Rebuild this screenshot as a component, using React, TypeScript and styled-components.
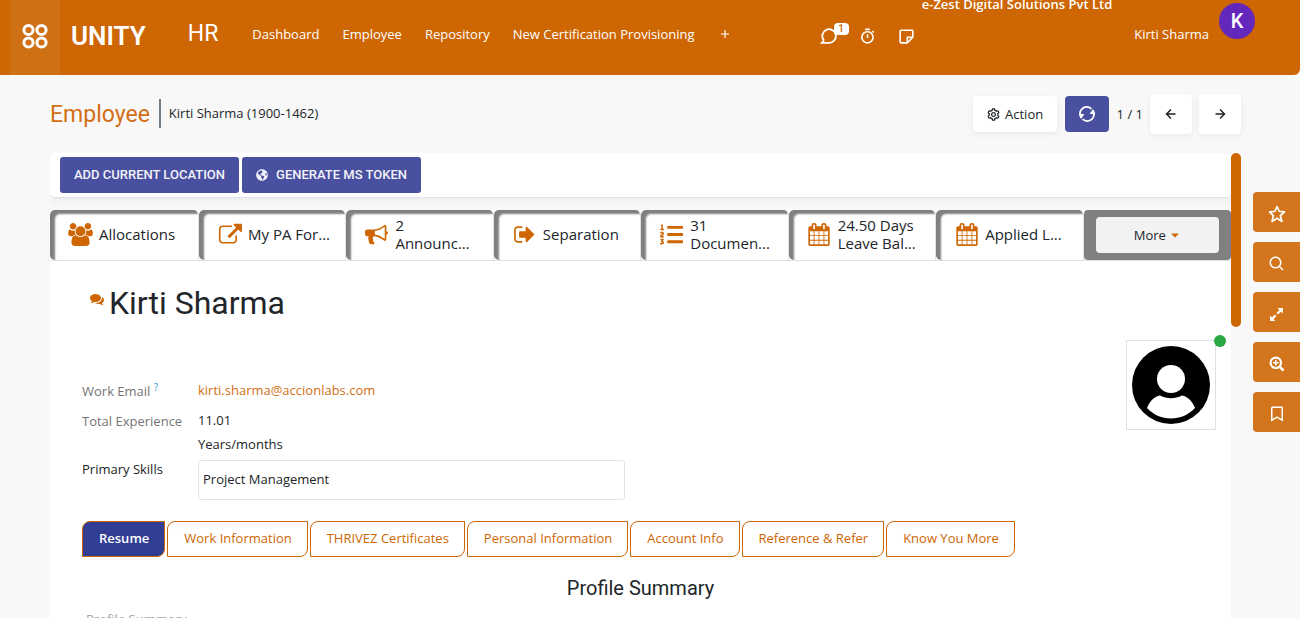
import React from 'react';
import styled, { createGlobalStyle, css } from 'styled-components';
import {
  BiStopwatch, BiNote, BiStar, BiSearch, BiBookmark,
  BiCog, BiLeftArrowAlt, BiRightArrowAlt, BiPlus,
} from 'react-icons/bi';
import { FaGlobeAmericas, FaListOl, FaCaretDown } from 'react-icons/fa';

const orange = '#cd6603';
const indigo = '#49509f';
const text = '#212529';
const heading = 'Roboto, "Open Sans", sans-serif';

const GlobalStyle = createGlobalStyle`
  *, *::before, *::after { box-sizing: border-box; }
  body {
    margin: 0;
    background: #f8f8f8;
    color: ${text};
    font: 400 13px/24px "Open Sans", Roboto, sans-serif;
  }
  button, input { font: inherit; color: inherit; margin: 0; }
  button { border: 0; cursor: pointer; }
  a { text-decoration: none; }
  svg { display: block; flex: none; }
  h1, h2, p { margin: 0; font-weight: 400; }
`;

const Page = styled.div`
  height: 100vh;
  display: flex;
  flex-direction: column;
  overflow: hidden;
`;

const Header = styled.header`
  flex: none;
  display: flex;
  align-items: center;
  height: 75px;
  padding: 0 45px 0 10px;
  overflow: hidden;
  background: ${orange};
  color: #fff;
  border-bottom-right-radius: 6px;
`;

const Launcher = styled.button`
  align-self: stretch;
  display: flex;
  align-items: center;
  justify-content: center;
  width: 50px;
  padding: 0 0 4px;
  background: #d07014;
  color: #fff;
`;

const Brand = styled.a`
  margin-left: 11px;
  padding-bottom: 4px;
  color: #fff;
  font: 600 26px/32px ${heading};
`;

const AppName = styled.a`
  margin-left: 42px;
  padding-bottom: 8px;
  color: #fff;
  font: 400 23px/32px ${heading};
`;

const Nav = styled.nav`
  display: flex;
  align-items: center;
  gap: 23px;
  margin-left: 34px;
  padding-bottom: 8px;
  white-space: nowrap;
`;

const NavLink = styled.a`
  color: #fff;
  font-weight: 500;
`;

const HeaderIcon = styled.button`
  position: relative;
  display: flex;
  padding: 0;
  background: none;
  color: #fff;
`;

const Badge = styled.span`
  position: absolute;
  top: -4px;
  left: 14px;
  width: 15px;
  height: 12px;
  border-radius: 4px;
  background: #fff;
  color: ${orange};
  font: 500 10px/12px ${heading};
  text-align: center;
`;

const Tray = styled.div`
  display: flex;
  gap: 20px;
  margin-left: auto;
  padding-bottom: 3px;
`;

const Company = styled.span`
  align-self: flex-start;
  margin: -8px 0 0 6px;
  font-size: 13px;
  font-weight: 600;
  white-space: nowrap;
`;

const UserName = styled.span`
  margin-left: 22px;
  padding-bottom: 8px;
  font-weight: 500;
  white-space: nowrap;
`;

const UserBadge = styled.span`
  align-self: flex-start;
  width: 36px;
  height: 36px;
  margin: 3px 0 0 10px;
  border-radius: 50%;
  background: #6327bb;
  font: 500 20px/36px ${heading};
  text-align: center;
`;

const Body = styled.div`
  flex: 1;
  min-height: 0;
  display: flex;
  gap: 12px;
  padding-left: 50px;
`;

const Main = styled.main`
  flex: 1;
  min-width: 0;
  display: flex;
  flex-direction: column;
`;

const ControlBar = styled.div`
  flex: none;
  display: flex;
  align-items: center;
  height: 78px;
`;

const Crumb = styled.h1`
  padding: 2px 9px 0 0;
  color: #d36f14;
  font: 400 23px/30px ${heading};
`;

const CrumbCurrent = styled.span`
  margin-bottom: 1px;
  padding-left: 8px;
  border-left: 2px solid #6f7d88;
  line-height: 29px;
`;

const Actions = styled.div`
  display: flex;
  align-items: center;
  margin-left: auto;
`;

const ActionButton = styled.button`
  display: flex;
  align-items: center;
  justify-content: center;
  gap: 4px;
  width: 84px;
  height: 36px;
  padding: 0;
  border-radius: 4px;
  background: #fff;
  box-shadow: 0 2px 6px rgba(0, 0, 0, 0.06);
`;

const RefreshButton = styled(ActionButton)`
  width: 44px;
  margin: 0 8px;
  background: ${indigo};
  color: #fff;
  box-shadow: none;
`;

const Pager = styled.div`
  display: flex;
  align-items: center;
  gap: 7px;
`;

const PageButton = styled(ActionButton)`
  width: 42px;
  height: 40px;
`;

const Scroller = styled.div`
  flex: 1;
  min-height: 0;
  display: flex;
  align-items: flex-start;
`;

const Sheet = styled.div`
  flex: 1;
  min-width: 0;
  align-self: stretch;
  display: flex;
  flex-direction: column;
  overflow: hidden;
`;

const ScrollThumb = styled.div`
  width: 10px;
  height: 174px;
  border-radius: 5px;
  background: ${orange};
`;

const StatusBar = styled.div`
  flex: none;
  display: flex;
  gap: 3px;
  padding: 4px 10px;
  border-bottom: 1px solid #dee2e6;
  border-radius: 5px;
  background: #fff;
  box-shadow: 0 2px 8px rgba(0, 0, 0, 0.06);
`;

const StatusButton = styled.button`
  display: flex;
  align-items: center;
  justify-content: center;
  gap: 8px;
  width: 179px;
  height: 36px;
  padding: 0;
  border-radius: 3px;
  background: ${indigo};
  color: #f3f3fa;
  font: 500 13px/20px ${heading};
  text-transform: uppercase;
  white-space: nowrap;
`;

const Stats = styled.div`
  flex: none;
  display: grid;
  grid-template-columns: 149px repeat(7, minmax(0, 1fr));
  margin-top: 12px;
  border-bottom: 1px solid #dee2e6;
  background: #fff;
`;

const Stat = styled.button`
  display: grid;
  grid-template-columns: 25px minmax(0, 1fr);
  align-items: center;
  height: 50px;
  gap: 6px;
  padding: 0 16px 2px 18px;
  border-right: 1px solid #dee2e6;
  border-radius: 5px 5px 0 5px;
  background: #fff;
  box-shadow: inset 5px 4px 2px #808080;
  font-size: 15px;
  line-height: 18px;
  text-align: left;
  white-space: nowrap;

  svg { justify-self: center; color: ${orange}; }
`;

const StatText = styled.span`
  display: flex;
  flex-direction: column;
`;

const MoreCell = styled.div`
  display: flex;
  padding: 7px 12px;
  border-radius: 4px;
  background: #808080;
`;

const MoreButton = styled.button`
  flex: 1;
  display: flex;
  align-items: center;
  justify-content: center;
  gap: 3px;
  padding: 0;
  border-radius: 4px;
  background: #f2f2f2;

  svg { color: ${orange}; }
`;

const Form = styled.section`
  flex: 1 0 auto;
  padding: 22px 15px 0 32px;
  background: #fff;
`;

const NameRow = styled.div`
  display: flex;
  align-items: flex-start;
  gap: 5px;
  padding-left: 8px;
  font: 400 32px/40px ${heading};

  svg { margin-top: 9px; color: ${orange}; }
`;

const Name = styled.h1`
  font: inherit;
`;

const Details = styled.div`
  display: flex;
  justify-content: space-between;
  align-items: flex-start;
  margin-top: 17px;
`;

const Fields = styled.div`
  display: grid;
  grid-template-columns: 116px 427px;
  padding-top: 38px;
`;

const Label = styled.label<{ $strong?: boolean; $lead?: boolean }>`
  padding-top: 1px;
  color: ${(p) => (p.$strong ? text : '#757575')};
  ${(p) => p.$lead && css`margin-top: 5px;`}
`;

const Help = styled.sup`
  color: #1fa2c4;
  font-size: 10px;
  line-height: 0;
`;

const Value = styled.div<{ $lead?: boolean }>`
  ${(p) => p.$lead && css`margin-top: 5px;`}
`;

const Email = styled.a`
  color: #d36f14;
`;

const SkillInput = styled.input`
  width: 100%;
  height: 40px;
  margin-top: 4px;
  padding: 0 4px 2px;
  border: 1px solid #e2e2ee;
  border-radius: 3px;
  background: #fff;
`;

const Photo = styled.div`
  position: relative;
  display: flex;
  align-items: center;
  justify-content: center;
  width: 90px;
  height: 90px;
  border: 1px solid #dee2e6;
`;

const Online = styled.span`
  position: absolute;
  top: -6px;
  right: -11px;
  width: 12px;
  height: 12px;
  border-radius: 50%;
  background: #28a745;
`;

const Tabs = styled.div`
  display: flex;
  gap: 2px;
  margin-top: 21px;
`;

const Tab = styled.button<{ $active?: boolean }>`
  height: 36px;
  padding: 0 15px 2px 16px;
  border: 1px solid ${orange};
  border-radius: 8px 0;
  background: ${(p) => (p.$active ? '#323d94' : '#fff')};
  color: ${(p) => (p.$active ? '#fff' : orange)};
  font-weight: ${(p) => (p.$active ? 600 : 400)};
  white-space: nowrap;
`;

const SectionTitle = styled.h2`
  margin: 17px 0 7px;
  padding-right: 17px;
  font: 400 20px/28px ${heading};
  text-align: center;
`;

const Hint = styled.p`
  padding-left: 4px;
  color: #a5a5a5;
  line-height: 20px;
`;

const Rail = styled.aside`
  display: flex;
  flex-direction: column;
  gap: 10px;
  width: 47px;
  padding-top: 117px;
`;

const RailButton = styled.button`
  display: flex;
  align-items: center;
  justify-content: center;
  height: 40px;
  padding: 4px 0 0;
  border-radius: 4px 0 0 4px;
  background: #d3751d;
  color: #fff;
`;

const glyphs = {
  users: ['-64 0 1920 1792', 'M529 896q-162 5-265 128h-134q-82 0-138-40.5t-56-118.5q0-353 124-353 6 0 43.5 21t97.5 42.5 119 21.5q67 0 133-23-5 37-5 66 0 139 81 256zm1071 637q0 120-73 189.5t-194 69.5h-874q-121 0-194-69.5t-73-189.5q0-53 3.5-103.5t14-109 26.5-108.5 43-97.5 62-81 85.5-53.5 111.5-20q10 0 43 21.5t73 48 107 48 135 21.5 135-21.5 107-48 73-48 43-21.5q61 0 111.5 20t85.5 53.5 62 81 43 97.5 26.5 108.5 14 109 3.5 103.5zm-1024-1277q0 106-75 181t-181 75-181-75-75-181 75-181 181-75 181 75 75 181zm704 384q0 159-112.5 271.5t-271.5 112.5-271.5-112.5-112.5-271.5 112.5-271.5 271.5-112.5 271.5 112.5 112.5 271.5zm576 225q0 78-56 118.5t-138 40.5h-134q-103-123-265-128 81-117 81-256 0-29-5-66 66 23 133 23 59 0 119-21.5t97.5-42.5 43.5-21q124 0 124 353zm-128-609q0 106-75 181t-181 75-181-75-75-181 75-181 181-75 181 75 75 181z'],
  external: ['0 0 1856 1792', 'M1472 992v320q0 119-84.5 203.5t-203.5 84.5h-832q-119 0-203.5-84.5t-84.5-203.5v-832q0-119 84.5-203.5t203.5-84.5h704q14 0 23 9t9 23v64q0 14-9 23t-23 9h-704q-66 0-113 47t-47 113v832q0 66 47 113t113 47h832q66 0 113-47t47-113v-320q0-14 9-23t23-9h64q14 0 23 9t9 23zm384-864v512q0 26-19 45t-45 19-45-19l-176-176-652 652q-10 10-23 10t-23-10l-114-114q-10-10-10-23t10-23l652-652-176-176q-19-19-19-45t19-45 45-19h512q26 0 45 19t19 45z'],
  bullhorn: ['0 0 1792 1792', 'M1664 640q53 0 90.5 37.5t37.5 90.5-37.5 90.5-90.5 37.5v384q0 52-38 90t-90 38q-417-347-812-380-58 19-91 66t-31 100.5 40 92.5q-20 33-23 65.5t6 58 33.5 55 48 50 61.5 50.5q-29 58-111.5 83t-168.5 11.5-132-55.5q-7-23-29.5-87.5t-32-94.5-23-89-15-101 3.5-98.5 22-110.5h-122q-66 0-113-47t-47-113v-192q0-66 47-113t113-47h480q435 0 896-384 52 0 90 38t38 90v384zm-128 604v-954q-394 302-768 343v270q377 42 768 341z'],
  leave: ['0 0 1664 1792', 'M704 1440q0 4 1 20t.5 26.5-3 23.5-10 19.5-20.5 6.5h-320q-119 0-203.5-84.5t-84.5-203.5v-704q0-119 84.5-203.5t203.5-84.5h320q13 0 22.5 9.5t9.5 22.5q0 4 1 20t.5 26.5-3 23.5-10 19.5-20.5 6.5h-320q-66 0-113 47t-47 113v704q0 66 47 113t113 47h312l11.5 1 11.5 3 8 5.5 7 9 2 13.5zm928-544q0 26-19 45l-544 544q-19 19-45 19t-45-19-19-45v-288h-448q-26 0-45-19t-19-45v-384q0-26 19-45t45-19h448v-288q0-26 19-45t45-19 45 19l544 544q19 19 19 45z'],
  calendar: ['64 0 1664 1792', 'M192 1664h288v-288h-288v288zm352 0h320v-288h-320v288zm-352-352h288v-320h-288v320zm352 0h320v-320h-320v320zm-352-384h288v-288h-288v288zm736 736h320v-288h-320v288zm-384-736h320v-288h-320v288zm768 736h288v-288h-288v288zm-384-352h320v-320h-320v320zm-352-864v-288q0-13-9.5-22.5t-22.5-9.5h-64q-13 0-22.5 9.5t-9.5 22.5v288q0 13 9.5 22.5t22.5 9.5h64q13 0 22.5-9.5t9.5-22.5zm736 864h288v-320h-288v320zm-384-384h320v-288h-320v288zm384 0h288v-288h-288v288zm32-480v-288q0-13-9.5-22.5t-22.5-9.5h-64q-13 0-22.5 9.5t-9.5 22.5v288q0 13 9.5 22.5t22.5 9.5h64q13 0 22.5-9.5t9.5-22.5zm384-64v1280q0 52-38 90t-90 38h-1408q-52 0-90-38t-38-90v-1280q0-52 38-90t90-38h128v-96q0-66 47-113t113-47h64q66 0 113 47t47 113v96h384v-96q0-66 47-113t113-47h64q66 0 113 47t47 113v96h128q52 0 90 38t38 90z'],
  comments: ['0 0 1792 1792', 'M1408 768q0 139-94 257t-256.5 186.5-353.5 68.5q-86 0-176-16-124 88-278 128-36 9-86 16h-3q-11 0-20.5-8t-11.5-21q-1-3-1-6.5t.5-6.5 2-6l2.5-5 3.5-5.5 4-5 4.5-5 4-4.5q5-6 23-25t26-29.5 22.5-29 25-38.5 20.5-44q-124-72-195-177t-71-224q0-139 94-257t256.5-186.5 353.5-68.5 353.5 68.5 256.5 186.5 94 257zm384 256q0 120-71 224.5t-195 176.5q10 24 20.5 44t25 38.5 22.5 29 26 29.5 23 25q1 1 4 4.5t4.5 5 4 5 3.5 5.5l2.5 5 2 6 .5 6.5-1 6.5q-3 14-13 22t-22 7q-50-7-86-16-154-40-278-128-90 16-176 16-271 0-472-132 58 4 88 4 161 0 309-45t264-129q125-92 192-212t67-254q0-77-23-152 129 71 204 178t75 230z'],
} as const;

function Glyph({ name, width, height = 23 }: { name: keyof typeof glyphs; width: number; height?: number }) {
  const [box, d] = glyphs[name];
  return (
    <svg width={width} height={height} viewBox={box} fill="currentColor" aria-hidden="true">
      <path d={d} />
    </svg>
  );
}

function RingsLogo() {
  return (
    <svg width="26" height="26" viewBox="0 0 26 26" fill="none" stroke="#fff" strokeWidth="3" aria-hidden="true">
      <circle cx="6.5" cy="7" r="4.6" />
      <circle cx="19.5" cy="7" r="4.6" />
      <circle cx="6.5" cy="19.5" r="4.6" />
      <circle cx="19.5" cy="19.5" r="4.6" />
    </svg>
  );
}

function ChatIcon() {
  return (
    <svg width="18" height="18" viewBox="0 0 18 18" fill="none" stroke="currentColor" strokeWidth="1.8" aria-hidden="true">
      <path d="M4 13.5A6.8 6.8 0 1 1 9 15.800H1.800L4 13.500" />
    </svg>
  );
}

function SyncIcon() {
  return (
    <svg width="18" height="18" viewBox="0 0 18 18" fill="none" stroke="currentColor" strokeWidth="1.8" aria-hidden="true">
      <path d="M3.600 13.200A6.800 6.800 0 0 1 13.400 3.800" />
      <path d="M14.400 4.800A6.800 6.800 0 0 1 4.600 14.200" />
      <path d="M1 8.200l5.400 1.400-3.600 3.800zM17 9.800l-5.400-1.400 3.600-3.800z" fill="currentColor" stroke="none" />
    </svg>
  );
}

function ExpandIcon() {
  return (
    <svg width="15" height="15" viewBox="0 0 15 15" aria-hidden="true">
      <path d="M8.500 1H14v5.500zM1 8.500V14h5.500z" fill="currentColor" />
      <path d="M12 3L8.300 6.700M6.700 8.300L3 12" stroke="currentColor" strokeWidth="2.200" />
    </svg>
  );
}

function ZoomIcon() {
  return (
    <svg width="16" height="16" viewBox="0 0 16 16" fill="none" stroke="currentColor" aria-hidden="true">
      <circle cx="6.800" cy="6.800" r="5.200" strokeWidth="2.200" />
      <path d="M10.800 10.800l3.700 3.700" strokeWidth="2.600" />
      <path d="M6.800 4v5.600M4 6.800h5.600" strokeWidth="1.500" />
    </svg>
  );
}

function PersonIcon() {
  return (
    <svg width="78" height="78" viewBox="0 0 78 78" aria-hidden="true">
      <circle cx="39" cy="39" r="39" fill="#000" />
      <circle cx="39" cy="33" r="14" fill="#fff" />
      <path d="M28 49.500c7 3.600 15 3.600 22 0 6 1.200 10.500 6 13 12.500C50 76 28 76 15 62c2.500-6.500 7-11.300 13-12.500z" fill="#fff" />
    </svg>
  );
}

const navItems = ['Dashboard', 'Employee', 'Repository', 'New Certification Provisioning'];

const stats: { icon: React.ReactNode; lines: string[] }[] = [
  { icon: <Glyph name="users" width={25} />, lines: ['Allocations'] },
  { icon: <Glyph name="external" width={24} />, lines: ['My PA For...'] },
  { icon: <Glyph name="bullhorn" width={23} />, lines: ['2', 'Announc...'] },
  { icon: <Glyph name="leave" width={22} />, lines: ['Separation'] },
  { icon: <FaListOl size={23} />, lines: ['31', 'Documen...'] },
  { icon: <Glyph name="calendar" width={22} />, lines: ['24.50 Days', 'Leave Bal...'] },
  { icon: <Glyph name="calendar" width={22} />, lines: ['Applied L...'] },
];

const tabs = [
  'Resume', 'Work Information', 'THRIVEZ Certificates', 'Personal Information',
  'Account Info', 'Reference & Refer', 'Know You More',
];

const railItems = [
  { label: 'Favourites', icon: <BiStar size={20} /> },
  { label: 'Search', icon: <BiSearch size={18} /> },
  { label: 'Full screen', icon: <ExpandIcon /> },
  { label: 'Zoom', icon: <ZoomIcon /> },
  { label: 'Bookmarks', icon: <BiBookmark size={18} /> },
];

export default function App() {
  return (
    <Page>
      <GlobalStyle />
      <Header>
        <Launcher aria-label="Applications"><RingsLogo /></Launcher>
        <Brand href="#">UNITY</Brand>
        <AppName href="#">HR</AppName>
        <Nav>
          {navItems.map((item) => <NavLink key={item} href="#">{item}</NavLink>)}
          <HeaderIcon aria-label="Add menu"><BiPlus size={14} /></HeaderIcon>
        </Nav>
        <Tray>
          <HeaderIcon aria-label="Messages"><ChatIcon /><Badge>1</Badge></HeaderIcon>
          <HeaderIcon aria-label="Timer"><BiStopwatch size={19} /></HeaderIcon>
          <HeaderIcon aria-label="Notes"><BiNote size={19} /></HeaderIcon>
        </Tray>
        <Company>e-Zest Digital Solutions Pvt Ltd</Company>
        <UserName>Kirti Sharma</UserName>
        <UserBadge>K</UserBadge>
      </Header>
      <Body>
        <Main>
          <ControlBar>
            <Crumb>Employee</Crumb>
            <CrumbCurrent>Kirti Sharma (1900-1462)</CrumbCurrent>
            <Actions>
              <ActionButton><BiCog size={15} />Action</ActionButton>
              <RefreshButton aria-label="Refresh"><SyncIcon /></RefreshButton>
              <Pager>
                <span>1 / 1</span>
                <PageButton aria-label="Previous"><BiLeftArrowAlt size={18} /></PageButton>
                <PageButton aria-label="Next"><BiRightArrowAlt size={18} /></PageButton>
              </Pager>
            </Actions>
          </ControlBar>
          <Scroller>
            <Sheet>
              <StatusBar>
                <StatusButton>Add current location</StatusButton>
                <StatusButton><FaGlobeAmericas size={12} />Generate MS Token</StatusButton>
              </StatusBar>
              <Stats>
                {stats.map(({ icon, lines }) => (
                  <Stat key={lines.join(' ')}>
                    {icon}
                    <StatText>{lines.map((line) => <span key={line}>{line}</span>)}</StatText>
                  </Stat>
                ))}
                <MoreCell><MoreButton>More <FaCaretDown size={12} /></MoreButton></MoreCell>
              </Stats>
              <Form>
                <NameRow>
                  <Glyph name="comments" width={14} height={14} />
                  <Name>Kirti Sharma</Name>
                </NameRow>
                <Details>
                  <Fields>
                    <Label as="span">Work Email <Help>?</Help></Label>
                    <Value><Email href="mailto:kirti.sharma@accionlabs.com">kirti.sharma@accionlabs.com</Email></Value>
                    <Label as="span" $lead>Total Experience</Label>
                    <Value $lead>11.01<br />Years/months</Value>
                    <Label htmlFor="skills" $strong>Primary Skills</Label>
                    <SkillInput id="skills" defaultValue="Project Management" />
                  </Fields>
                  <Photo><PersonIcon /><Online /></Photo>
                </Details>
                <Tabs role="tablist">
                  {tabs.map((tab, i) => (
                    <Tab key={tab} role="tab" aria-selected={i === 0} $active={i === 0}>{tab}</Tab>
                  ))}
                </Tabs>
                <SectionTitle>Profile Summary</SectionTitle>
                <Hint>Profile Summary</Hint>
              </Form>
            </Sheet>
            <ScrollThumb />
          </Scroller>
        </Main>
        <Rail>
          {railItems.map(({ label, icon }) => <RailButton key={label} aria-label={label}>{icon}</RailButton>)}
        </Rail>
      </Body>
    </Page>
  );
}
